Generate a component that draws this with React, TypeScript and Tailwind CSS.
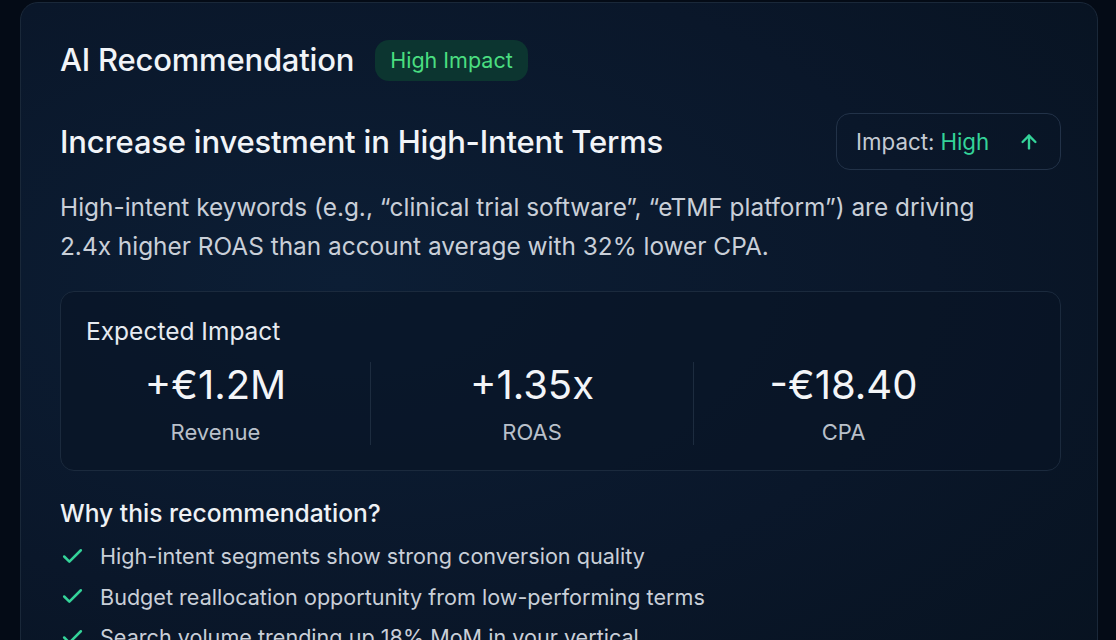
import { ArrowUp, Check } from 'lucide-react';

const METRICS = [
  { value: '+€1.2M', label: 'Revenue' },
  { value: '+1.35x', label: 'ROAS' },
  { value: '-€18.40', label: 'CPA' },
];

const REASONS = [
  'High-intent segments show strong conversion quality',
  'Budget reallocation opportunity from low-performing terms',
  'Search volume trending up 18% MoM in your vertical',
];

export default function App() {
  return (
    <div
      className="h-[640px] w-[1116px] overflow-hidden bg-[#040b16] pl-[20px] pt-[2px]"
      style={{ fontFamily: 'Inter, "Noto Sans", sans-serif' }}
    >
      <div className="h-[700px] w-[1078px] rounded-t-[18px] border border-[#1a2839] bg-[radial-gradient(ellipse_at_30%_40%,#0c1e35_0%,#0a172a_55%,#07121f_100%)] pl-[39px] pr-[36px] pt-[35px]">
        <div className="flex items-center gap-[21px]">
          <h1 className="text-[31px] font-medium leading-[44px] tracking-[-0.2px] text-[#f1f4f8]">AI Recommendation</h1>
          <span className="flex h-[41px] items-center rounded-[14px] bg-[#0c3530] px-[15px] text-[21.5px] text-[#4ade80]">
            High Impact
          </span>
        </div>

        <div className="mt-[31px] flex items-center justify-between">
          <h2 className="text-[31px] font-medium leading-[44px] tracking-[-0.2px] text-[#f1f4f8]">
            Increase investment in High-Intent Terms
          </h2>
          <div className="flex h-[57px] w-[225px] items-center rounded-[14px] border border-[#223248] pl-[19px] text-[22.3px]">
            <span className="text-[#c4cad3]">Impact:</span>
            <span className="ml-[6px] text-[#34d399]">High</span>
            <ArrowUp className="ml-auto mr-[20px] h-[22px] w-[22px] text-[#34d399]" strokeWidth={2.6} />
          </div>
        </div>

        <p className="mt-[18px] w-[960px] text-[24.4px] leading-[39px] text-[#c9cfd8]">
          High-intent keywords (e.g., “clinical trial software”, “eTMF platform”) are driving 2.4x higher ROAS
          than account average with 32% lower CPA.
        </p>

        <div className="mt-[25px] h-[180px] rounded-[14px] border border-[#1b2a3d] bg-[#081424]/60 pt-[22px]">
          <p className="pl-[25px] text-[24.5px] leading-[34px] text-[#e6eaf0]">Expected Impact</p>
          <div className="mt-[14px] grid grid-cols-[309px_323px_300px]">
            {METRICS.map((m, i) => (
              <div
                key={m.label}
                className={`flex flex-col items-center ${i > 0 ? 'border-l border-[#1d2c3f]' : ''}`}
              >
                <span className="text-[40px] leading-[46px] text-[#f3f5f8]">{m.value}</span>
                <span className="mt-[11px] text-[22px] leading-[26px] text-[#b9c0ca]">{m.label}</span>
              </div>
            ))}
          </div>
        </div>

        <h3 className="mt-[25px] text-[24.6px] font-medium leading-[34px] text-[#eef1f5]">Why this recommendation?</h3>
        <ul className="mt-[12px] flex flex-col gap-[12.5px]">
          {REASONS.map((r) => (
            <li key={r} className="flex items-center gap-[15px] text-[21.6px] leading-[28px] text-[#c9cfd8]">
              <Check className="h-[25px] w-[25px] text-[#34d399]" strokeWidth={2.4} />
              {r}
            </li>
          ))}
        </ul>
      </div>
    </div>
  );
}
